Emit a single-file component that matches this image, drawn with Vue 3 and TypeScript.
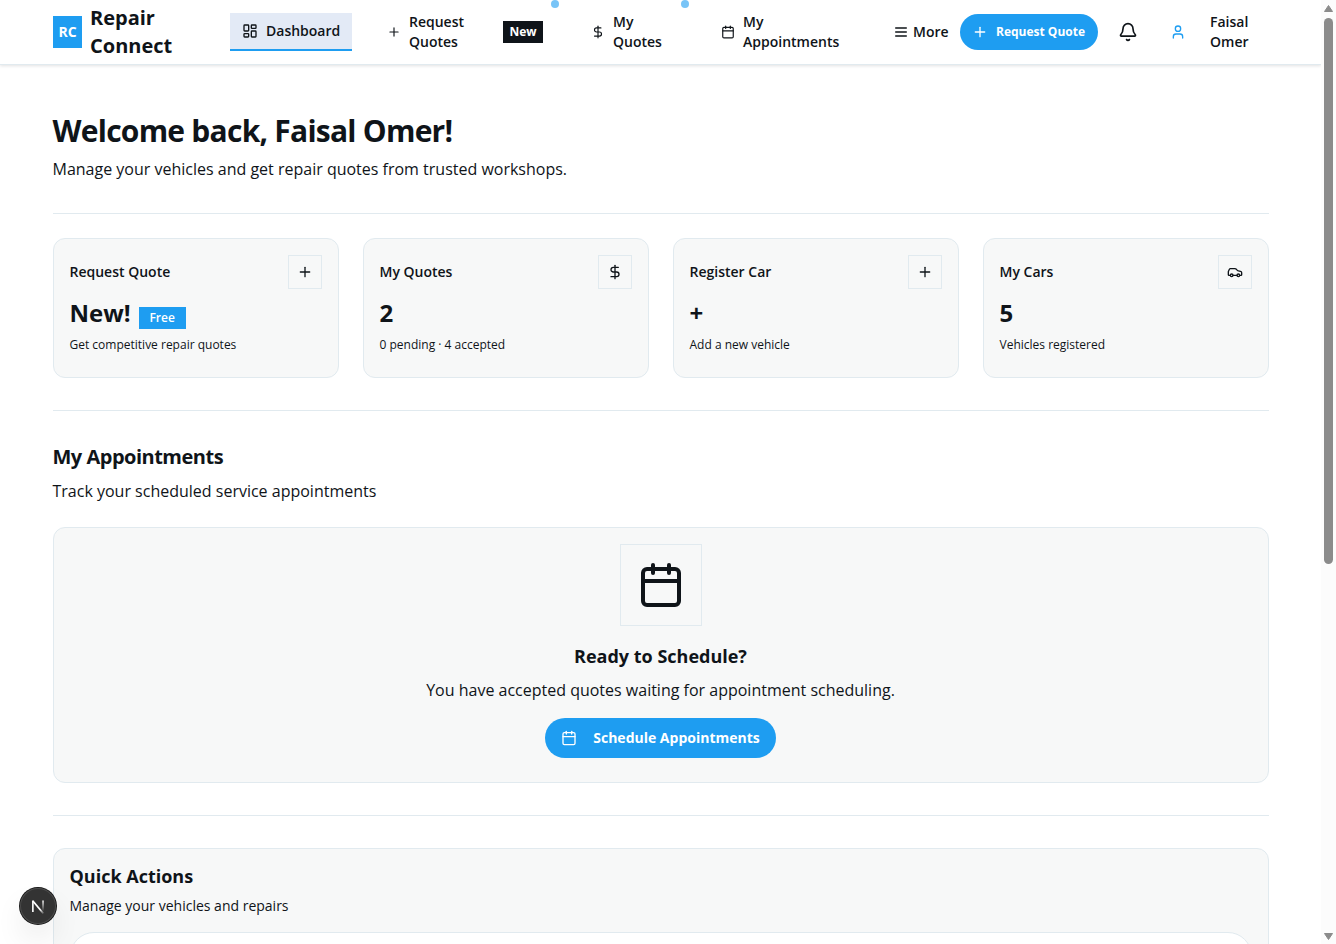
<script setup lang="ts">
interface StatCard {
  title: string
  value: string
  badge?: string
  note: string
  icon: string
}

const icons: Record<string, string[]> = {
  plus: ['M5 12h14', 'M12 5v14'],
  dollar: ['M12 2v20', 'M17 5H9.5a3.5 3.5 0 0 0 0 7h5a3.5 3.5 0 0 1 0 7H6'],
  car: [
    'M19 17h2c.6 0 1-.4 1-1v-3c0-.9-.7-1.7-1.5-1.9C18.7 10.6 16 10 16 10s-1.3-1.4-2.2-2.3c-.5-.4-1.1-.7-1.8-.7H5c-.6 0-1.1.4-1.4.9l-1.4 2.9A3.7 3.7 0 0 0 2 12v4c0 .6.4 1 1 1h2',
    'M5 17a2 2 0 1 0 4 0a2 2 0 1 0-4 0',
    'M9 17h6',
    'M15 17a2 2 0 1 0 4 0a2 2 0 1 0-4 0',
  ],
  calendar: [
    'M8 2v4',
    'M16 2v4',
    'M5 4h14a2 2 0 0 1 2 2v14a2 2 0 0 1-2 2H5a2 2 0 0 1-2-2V6a2 2 0 0 1 2-2z',
    'M3 10h18',
  ],
  dashboard: ['M4 3h5a1 1 0 0 1 1 1v7a1 1 0 0 1-1 1H4a1 1 0 0 1-1-1V4a1 1 0 0 1 1-1z',
    'M15 3h5a1 1 0 0 1 1 1v3a1 1 0 0 1-1 1h-5a1 1 0 0 1-1-1V4a1 1 0 0 1 1-1z',
    'M15 12h5a1 1 0 0 1 1 1v7a1 1 0 0 1-1 1h-5a1 1 0 0 1-1-1v-7a1 1 0 0 1 1-1z',
    'M4 16h5a1 1 0 0 1 1 1v3a1 1 0 0 1-1 1H4a1 1 0 0 1-1-1v-3a1 1 0 0 1 1-1z'],
  menu: ['M4 6h16', 'M4 12h16', 'M4 18h16'],
  bell: [
    'M10.268 21a2 2 0 0 0 3.464 0',
    'M3.262 15.326A1 1 0 0 0 4 17h16a1 1 0 0 0 .74-1.673C19.41 13.956 18 12.499 18 8A6 6 0 0 0 6 8c0 4.499-1.411 5.956-2.738 7.326',
  ],
  user: ['M19 21v-2a4 4 0 0 0-4-4H9a4 4 0 0 0-4 4v2', 'M8 7a4 4 0 1 0 8 0a4 4 0 1 0-8 0'],
}

const stats: StatCard[] = [
  { title: 'Request Quote', value: 'New!', badge: 'Free', note: 'Get competitive repair quotes', icon: 'plus' },
  { title: 'My Quotes', value: '2', note: '0 pending · 4 accepted', icon: 'dollar' },
  { title: 'Register Car', value: '+', note: 'Add a new vehicle', icon: 'plus' },
  { title: 'My Cars', value: '5', note: 'Vehicles registered', icon: 'car' },
]
</script>

<template>
  <div class="window">
    <div class="page">
      <header class="header">
        <div class="bar">
          <div class="logo">RC</div>
          <div class="brand">Repair<br />Connect</div>
          <nav class="nav">
            <a class="link active">
              <svg class="icon" viewBox="0 0 24 24"><path v-for="d in icons.dashboard" :key="d" :d="d" /></svg>
              <span>Dashboard</span>
            </a>
            <a class="link request">
              <svg class="icon small" viewBox="0 0 24 24"><path v-for="d in icons.plus" :key="d" :d="d" /></svg>
              <span>Request<br />Quotes</span>
              <b class="new">New</b>
              <i class="dot"></i>
            </a>
            <a class="link quotes">
              <svg class="icon small" viewBox="0 0 24 24"><path v-for="d in icons.dollar" :key="d" :d="d" /></svg>
              <span>My<br />Quotes</span>
              <i class="dot"></i>
            </a>
            <a class="link appts">
              <svg class="icon small" viewBox="0 0 24 24"><path v-for="d in icons.calendar" :key="d" :d="d" /></svg>
              <span>My<br />Appointments</span>
            </a>
            <a class="link more">
              <svg class="icon" viewBox="0 0 24 24"><path v-for="d in icons.menu" :key="d" :d="d" /></svg>
              <span>More</span>
            </a>
          </nav>
          <button class="cta">
            <svg class="icon" viewBox="0 0 24 24"><path v-for="d in icons.plus" :key="d" :d="d" /></svg>
            <span>Request Quote</span>
          </button>
          <svg class="icon bell" viewBox="0 0 24 24"><path v-for="d in icons.bell" :key="d" :d="d" /></svg>
          <svg class="icon user" viewBox="0 0 24 24"><path v-for="d in icons.user" :key="d" :d="d" /></svg>
          <div class="name">Faisal<br />Omer</div>
        </div>
      </header>

      <main class="main">
        <section class="intro">
          <h1>Welcome back, Faisal Omer!</h1>
          <p>Manage your vehicles and get repair quotes from trusted workshops.</p>
        </section>

        <section class="stats">
          <article v-for="s in stats" :key="s.title" class="card stat">
            <div class="stat-head">
              <h3>{{ s.title }}</h3>
              <div class="box">
                <svg class="icon" viewBox="0 0 24 24"><path v-for="d in icons[s.icon]" :key="d" :d="d" /></svg>
              </div>
            </div>
            <div class="value">{{ s.value }}<span v-if="s.badge" class="free">{{ s.badge }}</span></div>
            <p>{{ s.note }}</p>
          </article>
        </section>

        <section class="appointments">
          <h2>My Appointments</h2>
          <p class="sub">Track your scheduled service appointments</p>
          <div class="card ready">
            <div class="box large">
              <svg class="icon" viewBox="0 0 24 24"><path v-for="d in icons.calendar" :key="d" :d="d" /></svg>
            </div>
            <h3>Ready to Schedule?</h3>
            <p>You have accepted quotes waiting for appointment scheduling.</p>
            <button class="schedule">
              <svg class="icon" viewBox="0 0 24 24"><path v-for="d in icons.calendar" :key="d" :d="d" /></svg>
              <span>Schedule Appointments</span>
            </button>
          </div>
        </section>

        <section class="card quick">
          <h3>Quick Actions</h3>
          <p>Manage your vehicles and repairs</p>
          <div class="panel"></div>
        </section>
      </main>
    </div>

    <div class="scrollbar">
      <svg class="arrow" viewBox="0 0 9 7"><path d="M4.5 0.5L8.5 6.5H0.5z" /></svg>
      <div class="thumb"></div>
      <svg class="arrow down" viewBox="0 0 9 7"><path d="M4.5 6.5L8.5 0.5H0.5z" /></svg>
    </div>

    <div class="devtools">
      <svg viewBox="0 0 40 40" fill="none">
        <defs>
          <linearGradient id="diag" x1="20" y1="20" x2="27" y2="29" gradientUnits="userSpaceOnUse">
            <stop offset="0.4" stop-color="#fff" />
            <stop offset="1" stop-color="#fff" stop-opacity="0" />
          </linearGradient>
          <linearGradient id="stem" x1="26" y1="13" x2="26" y2="26" gradientUnits="userSpaceOnUse">
            <stop stop-color="#fff" />
            <stop offset="1" stop-color="#fff" stop-opacity="0" />
          </linearGradient>
        </defs>
        <path d="M14.3 14.4L26 28.3" stroke="url(#diag)" stroke-width="2" />
        <path d="M14.3 26.8V14" stroke="#fff" stroke-width="1.8" />
        <path d="M25.6 14V26" stroke="url(#stem)" stroke-width="1.8" />
      </svg>
    </div>
  </div>
</template>

<style>
html,
body {
  overflow: hidden;
  background: #fff;
}
</style>

<style scoped>
* {
  box-sizing: border-box;
}
h1,
h2,
h3,
p {
  margin: 0;
}
.window {
  display: flex;
  width: 1336px;
  height: 944px;
  overflow: hidden;
  position: relative;
  color: #0f1419;
  font: 400 16px/24px 'Open Sans', sans-serif;
}
.page {
  width: 1321px;
  height: 944px;
  overflow: hidden;
}
.icon {
  display: block;
  flex: none;
  width: 16px;
  height: 16px;
  fill: none;
  stroke: currentColor;
  stroke-width: 2;
  stroke-linecap: round;
  stroke-linejoin: round;
}
.icon.small {
  width: 14px;
  height: 14px;
}

.header {
  height: 65px;
  border-bottom: 1px solid #e1eaef;
  box-shadow: 0 1px 3px rgba(15, 20, 25, 0.12);
}
.bar {
  display: flex;
  align-items: center;
  height: 64px;
  padding-left: 53px;
  font-size: 14px;
  line-height: 20px;
  font-weight: 600;
}
.logo {
  width: 29px;
  height: 32px;
  background: #1e9df1;
  color: #fff;
  font-weight: 700;
  line-height: 32px;
  text-align: center;
}
.brand {
  width: 140px;
  padding-left: 8px;
  margin-right: 8px;
  font-size: 20px;
  line-height: 28px;
  font-weight: 700;
}
.nav {
  display: flex;
  align-items: center;
  height: 64px;
  width: 730px;
}
.link {
  display: flex;
  align-items: center;
  gap: 8px;
  position: relative;
  height: 64px;
  flex: none;
}
.link.active {
  width: 122px;
  height: 38px;
  padding-left: 12px;
  background: #e3eaf6;
  border-bottom: 2px solid #1e9df1;
}
.request {
  width: 203px;
  padding-left: 35px;
}
.quotes {
  width: 130px;
  padding-left: 36px;
}
.appts {
  width: 208px;
  padding-left: 36px;
}
.more {
  gap: 4px;
}
.new {
  position: absolute;
  left: 151px;
  top: 21px;
  width: 40px;
  height: 22px;
  background: #0f1419;
  color: #fff;
  font-size: 12px;
  font-weight: 700;
  line-height: 22px;
  text-align: center;
}
.dot {
  position: absolute;
  right: 0;
  top: 0;
  width: 8px;
  height: 8px;
  margin-right: -4px;
  border-radius: 50%;
  background: #78c4f7;
}
.cta,
.schedule {
  display: flex;
  align-items: center;
  gap: 16px;
  border: 0;
  border-radius: 20px;
  background: #1e9df1;
  color: #fff;
  font-family: inherit;
  font-weight: 700;
  white-space: nowrap;
}
.cta span,
.schedule span {
  padding-bottom: 2px;
}
.cta {
  gap: 8px;
  width: 138px;
  height: 36px;
  padding: 0 12px;
  font-size: 12px;
}
.bell {
  width: 20px;
  height: 20px;
  margin-left: 20px;
}
.user {
  margin-left: 32px;
  color: #1e9df1;
}
.name {
  margin-left: 24px;
}

.main {
  width: 1216px;
  margin-left: 52.5px;
  padding-top: 48px;
}
.intro {
  height: 101px;
  border-bottom: 1px solid #e1eaef;
}
h1 {
  font-size: 30px;
  line-height: 36px;
  font-weight: 700;
  letter-spacing: -0.75px;
}
.intro p {
  margin-top: 8px;
}
.card {
  padding: 16px;
  border: 1px solid #e1eaef;
  border-radius: 12px;
  background: #f7f8f8;
}
.stats {
  display: grid;
  grid-template-columns: repeat(4, 1fr);
  gap: 24px;
  padding: 24px 0 32px;
  border-bottom: 1px solid #e1eaef;
}
.stat {
  height: 140px;
}
.stat-head {
  display: flex;
  align-items: center;
  justify-content: space-between;
}
.stat h3 {
  font-size: 14px;
  line-height: 20px;
  font-weight: 600;
}
.box {
  padding: 8px;
  border: 1px solid #e1eaef;
}
.value {
  display: flex;
  margin-top: 8px;
  font-size: 24px;
  line-height: 32px;
  font-weight: 700;
}
.free {
  width: 47px;
  height: 22px;
  margin: 10px 0 0 8px;
  background: #1e9df1;
  color: #fff;
  font-size: 12px;
  line-height: 22px;
  font-weight: 600;
  text-align: center;
}
.stat p {
  margin-top: 8px;
  font-size: 12px;
  line-height: 16px;
}

.appointments {
  padding: 32px 0;
  border-bottom: 1px solid #e1eaef;
}
h2 {
  font-size: 20px;
  line-height: 28px;
  font-weight: 700;
  letter-spacing: -0.5px;
}
.sub {
  margin-top: 8px;
}
.ready {
  display: flex;
  flex-direction: column;
  align-items: center;
  height: 256px;
  margin-top: 24px;
}
.large {
  padding: 16px;
}
.large .icon {
  width: 48px;
  height: 48px;
}
.ready h3 {
  margin-top: 16px;
  font-size: 18px;
  line-height: 28px;
  font-weight: 700;
}
.ready p {
  margin-top: 8px;
}
.schedule {
  height: 40px;
  margin-top: 16px;
  padding: 0 16px;
  font-size: 14px;
}
.quick {
  height: 300px;
  margin-top: 32px;
  padding-top: 13px;
}
.quick h3 {
  font-size: 18px;
  line-height: 28px;
  font-weight: 700;
}
.quick p {
  margin-top: 6px;
  font-size: 14px;
  line-height: 20px;
}
.panel {
  height: 200px;
  margin-top: 16px;
  border: 1px solid #e1eaef;
  border-radius: 24px;
  background: #fff;
}

.scrollbar {
  display: flex;
  flex-direction: column;
  align-items: center;
  width: 15px;
  height: 944px;
  padding: 5px 0 4px;
  background: #fcfcfc;
}
.arrow {
  width: 9px;
  height: 7px;
  fill: #8b8b8b;
  stroke: #8b8b8b;
  stroke-linejoin: round;
}
.thumb {
  width: 9px;
  height: 546px;
  margin-top: 6px;
  border-radius: 5px;
  background: #8b8b8b;
}
.down {
  margin-top: auto;
}

.devtools {
  position: absolute;
  left: 20px;
  top: 888px;
  width: 36px;
  height: 36px;
  border-radius: 50%;
  background: #333;
  box-shadow: 0 0 0 1px #171717, inset 0 0 0 1px #4b4b4b, 0 16px 32px -8px rgba(0, 0, 0, 0.24);
}
.devtools svg {
  display: block;
  width: 36px;
  height: 36px;
}
</style>
